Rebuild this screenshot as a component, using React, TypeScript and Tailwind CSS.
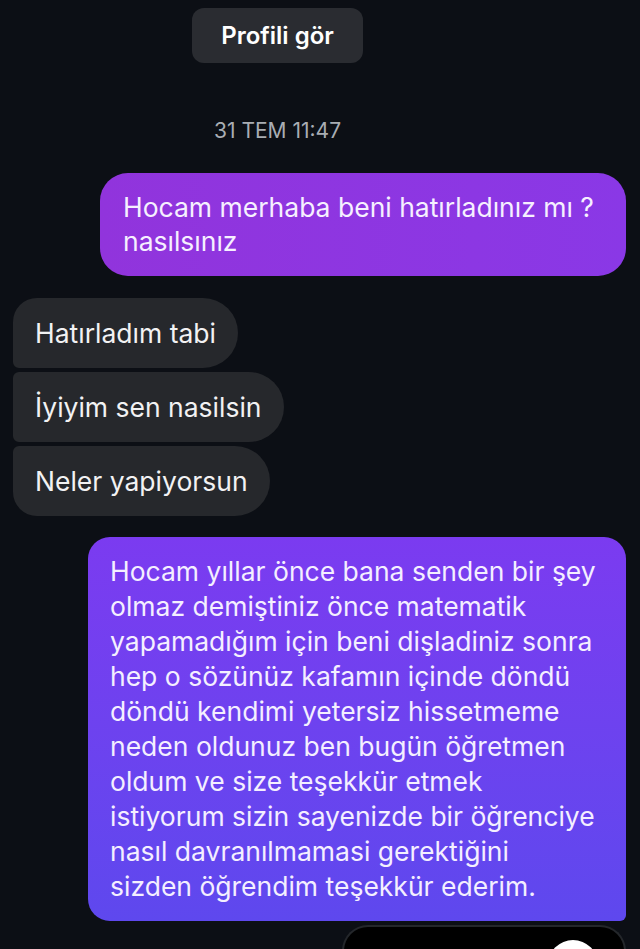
export default function App() {
  const longLines = [
    "Hocam yıllar önce bana senden bir şey",
    "olmaz demiştiniz önce matematik",
    "yapamadığım için beni dişladiniz sonra",
    "hep o sözünüz kafamın içinde döndü",
    "döndü kendimi yetersiz hissetmeme",
    "neden oldunuz ben bugün öğretmen",
    "oldum ve size teşekkür etmek",
    "istiyorum sizin sayenizde bir öğrenciye",
    "nasıl davranılmamasi gerektiğini",
    "sizden öğrendim teşekkür ederim.",
  ]

  return (
    <div className="h-[949px] w-[640px] overflow-hidden bg-[#0c0f15] font-['Inter','Noto_Sans',sans-serif] text-[26.5px]">
      {/* header */}
      <div className="flex w-[555px] flex-col items-center pt-[8px]">
        <div className="flex h-[55px] w-[171px] items-center justify-center rounded-[12px] bg-[#2a2c31] text-[24px] font-semibold text-white">
          Profili gör
        </div>
        <div className="mt-[57px] text-[21px] leading-none text-[#a9adb3]">31 TEM 11:47</div>
      </div>

      {/* first sent message */}
      <div className="mt-[32px] flex justify-end pr-[14px]">
        <div className="w-[526px] rounded-[28px] bg-linear-to-r from-[#9134dc] to-[#8a38e6] px-[23px] pt-[17px] pb-[18px] leading-[34px] text-[#f6f0ff]">
          <div className="whitespace-nowrap">Hocam merhaba beni hatırladınız mı ?</div>
          <div>nasılsınız</div>
        </div>
      </div>

      {/* received */}
      <div className="mt-[22px] flex flex-col items-start gap-[4px] pl-[13px] text-[#f2f2f3]">
        <div className="flex h-[70px] items-center rounded-r-[35px] rounded-tl-[24px] rounded-bl-[6px] bg-[#26282c] px-[22px] leading-[34px]">
          Hatırladım tabi
        </div>
        <div className="flex h-[70px] items-center rounded-r-[35px] rounded-l-[6px] bg-[#26282c] px-[22px] leading-[34px]">
          İyiyim sen nasilsin
        </div>
        <div className="flex h-[70px] items-center rounded-r-[35px] rounded-tl-[6px] rounded-bl-[24px] bg-[#26282c] px-[22px] leading-[34px]">
          Neler yapiyorsun
        </div>
      </div>

      {/* long sent message */}
      <div className="mt-[21px] flex justify-end pr-[14px]">
        <div className="w-[538px] rounded-[22px] rounded-br-[6px] bg-linear-to-b from-[#7b3bf0] to-[#5e48ee] px-[22px] py-[17px] leading-[35px] text-[#f4efff]">
          {longLines.map((line) => (
            <div key={line} className="whitespace-nowrap">
              {line}
            </div>
          ))}
        </div>
      </div>

      {/* shared post preview, cut off */}
      <div className="mt-[4px] flex justify-end pr-[14px]">
        <div className="relative h-[60px] w-[284px] rounded-t-[26px] border-[2px] border-b-0 border-[#24272b] bg-black">
          <div className="absolute left-[204px] top-[13px] h-[50px] w-[50px] rounded-full bg-white" />
        </div>
      </div>
    </div>
  )
}
